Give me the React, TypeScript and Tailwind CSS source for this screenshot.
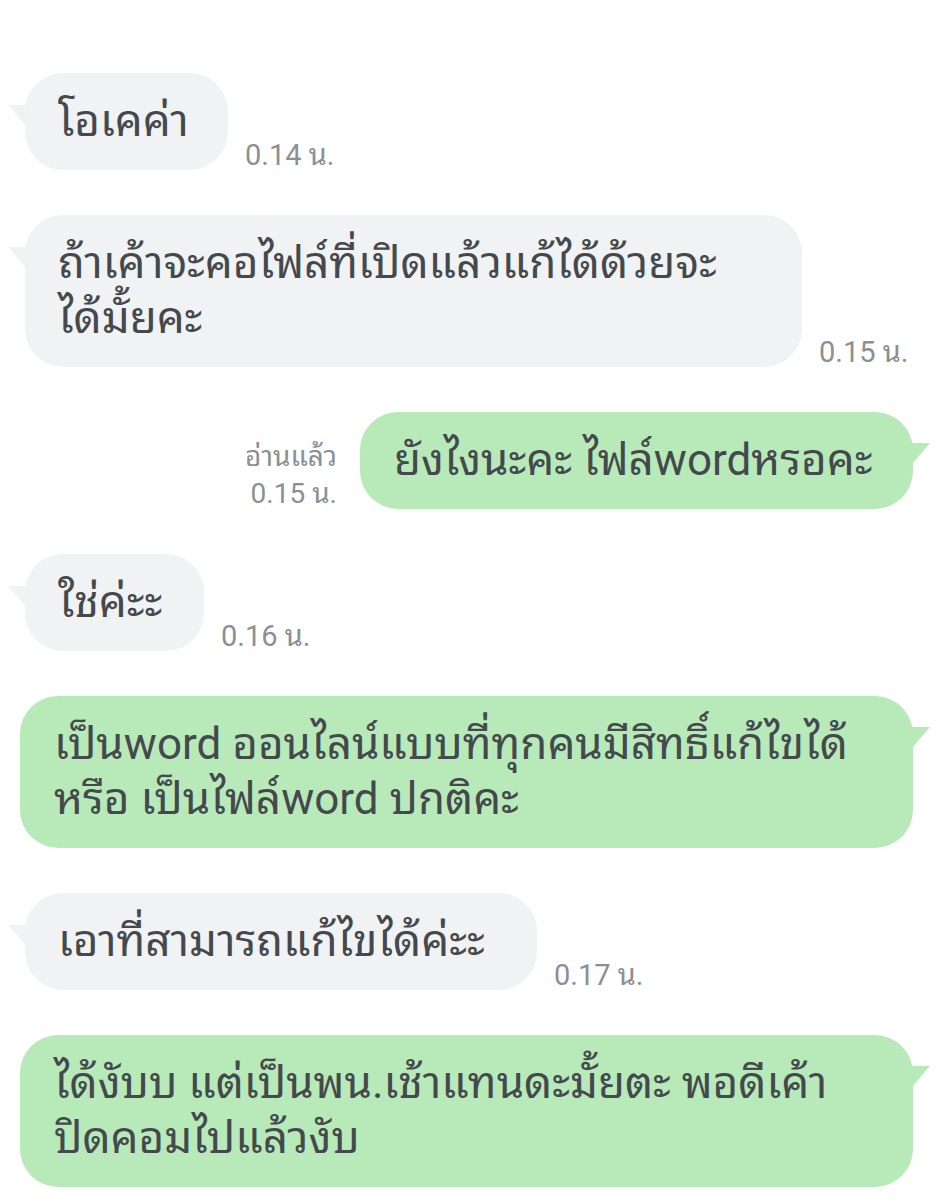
import React from "react";

const FONT = { fontFamily: 'Roboto, "Noto Sans Thai Looped", "Noto Sans Thai", sans-serif' };

function LeftTail() {
  return (
    <span
      className="absolute left-[-17px] top-[32px] h-[21px] w-[18px] bg-[#f1f2f4]"
      style={{ clipPath: "polygon(0 0, 100% 0, 100% 100%)" }}
    />
  );
}

function RightTail() {
  return (
    <span
      className="absolute right-[-17px] top-[31px] h-[21px] w-[18px] bg-[#b8e9b9]"
      style={{ clipPath: "polygon(0 0, 100% 0, 0 100%)" }}
    />
  );
}

function Left({ lines, time, width }: { lines: string[]; time: string; width?: string }) {
  return (
    <div className="flex items-end pl-[25px]">
      <div
        className={`relative rounded-[38px] bg-[#f1f2f4] px-[33px] py-[21px] text-[44px] leading-[55px] text-[#44494d] ${width ?? ""}`}
      >
        <LeftTail />
        {lines.map((l, i) => (
          <div key={i} className="whitespace-nowrap">
            {l}
          </div>
        ))}
      </div>
      <div className="ml-[17px] mb-[-3px] whitespace-nowrap text-[29px] leading-[36px] text-[#8b9095]">{time}</div>
    </div>
  );
}

function Right({ lines, meta, width }: { lines: string[]; meta?: string[]; width?: string }) {
  return (
    <div className="flex items-end justify-end pr-[23px]">
      {meta && (
        <div className="mr-[23px] mb-[-3px] flex flex-col items-end text-[28px] leading-[37px] text-[#8b9095]">
          {meta.map((m, i) => (
            <div key={i} className="whitespace-nowrap">
              {m}
            </div>
          ))}
        </div>
      )}
      <div
        className={`relative rounded-[38px] bg-[#b8e9b9] px-[34px] py-[21px] text-[44px] leading-[55px] text-[#44494d] ${width ?? ""}`}
      >
        <RightTail />
        {lines.map((l, i) => (
          <div key={i} className="whitespace-nowrap">
            {l}
          </div>
        ))}
      </div>
    </div>
  );
}

export default function App() {
  return (
    <div className="min-h-[1200px] w-[936px] overflow-hidden bg-white" style={FONT}>
      <div className="flex flex-col gap-[45px] pt-[73px]">
        <Left lines={["โอเคค่า"]} time="0.14 น." width="w-[203px]" />
        <Left lines={["ถ้าเค้าจะคอไฟล์ที่เปิดแล้วแก้ได้ด้วยจะ", "ได้มั้ยคะ"]} time="0.15 น." width="w-[777px]" />
        <Right lines={["ยังไงนะคะ ไฟล์wordหรอคะ"]} meta={["อ่านแล้ว", "0.15 น."]} width="w-[553px]" />
        <Left lines={["ใช่ค่ะะ"]} time="0.16 น." width="w-[179px]" />
        <Right
          lines={["เป็นword ออนไลน์แบบที่ทุกคนมีสิทธิ์แก้ไขได้", "หรือ เป็นไฟล์word ปกติคะ"]}
          width="w-[893px]"
        />
        <Left lines={["เอาที่สามารถแก้ไขได้ค่ะะ"]} time="0.17 น." width="w-[512px]" />
        <Right lines={["ได้งับบ แต่เป็นพน.เช้าแทนดะมั้ยตะ พอดีเค้า", "ปิดคอมไปแล้วงับ"]} width="w-[893px]" />
      </div>
    </div>
  );
}
